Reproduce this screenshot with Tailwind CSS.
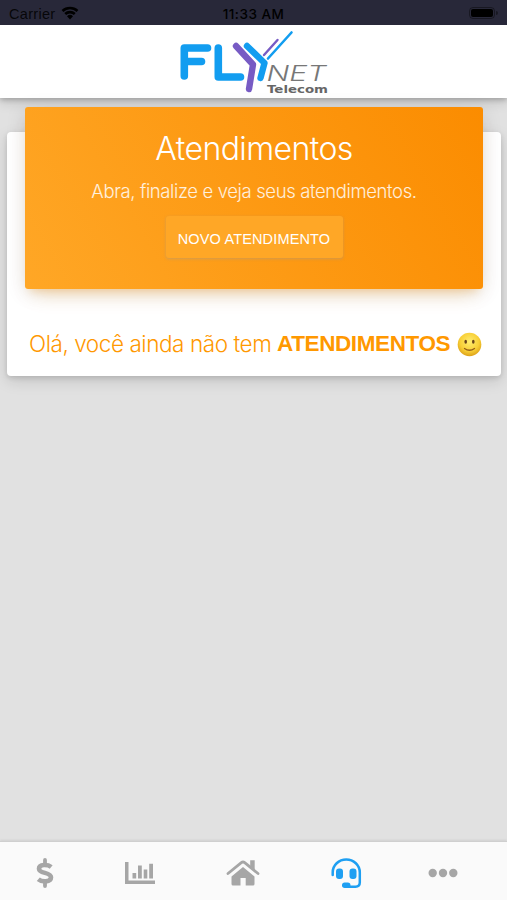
<!DOCTYPE html>
<html lang="pt-BR">

<head>
    <meta charset="UTF-8">
    <meta content="width=device-width, initial-scale=1.0" name="viewport">
    <title>Flynet Telecom - Atendimentos</title>
    <script src="https://cdn.jsdelivr.net/npm/@tailwindcss/browser@4"></script>
</head>

<body class="bg-[#e1e1e1] font-['Inter','Liberation_Sans',sans-serif] h-screen flex flex-col overflow-hidden">

<div class="relative z-20 shrink-0 h-[25px] bg-[#282839] px-[9px] grid grid-cols-3 items-center text-black text-sm leading-none">
    <div class="flex items-center gap-[6px] pt-[3px]">
        <span class="font-['Liberation_Sans',sans-serif] text-[14.500px] tracking-[0.3px] text-black/85">Carrier</span>
        <svg class="mb-[2px]" height="14" viewBox="0 0 18 14" width="18">
            <path d="M1.500 5A11 11 0 0 1 16.500 5M4.200 8A7 7 0 0 1 13.800 8" fill="none" stroke="currentColor" stroke-width="2.600"/>
            <path d="M9 13.500L6 10.300A4.300 4.300 0 0 1 12 10.300Z" fill="currentColor"/>
        </svg>
    </div>
    <span class="text-center pt-[4px] font-medium text-[13.500px] tracking-[0.5px]">11:33 AM</span>
    <div class="flex justify-end items-center gap-px pt-px pr-[-1px]">
        <div class="w-[26px] h-[12px] rounded-[4px] border border-black/40 p-px">
            <div class="h-full rounded-[2px] bg-black"></div>
        </div>
        <div class="w-[2px] h-[4px] rounded-r-full bg-black/40"></div>
    </div>
</div>

<header class="relative z-0 shrink-0 h-[73px] bg-white shadow-[0_2px_5px_rgba(0,0,0,0.2),0_4px_12px_rgba(0,0,0,0.14)] flex justify-center pt-[4px]">
    <svg aria-label="Flynet Telecom" height="66" role="img" viewBox="179 29 150 66" width="150">
        <g fill="none" stroke-linecap="round" stroke-linejoin="round">
            <path d="M184.300 76V48H207.500M184.500 61.500H201.500M218.300 48V77H240.500" stroke="#129df0" stroke-width="7.600"/>
            <path d="M236 46L253 64.500L249 89" stroke="#775bc4" stroke-width="6.400"/>
            <path d="M247 46L264.500 63L260.500 78" stroke="#129df0" stroke-width="6.400"/>
            <path d="M264 55L277.500 40" stroke="#775bc4" stroke-width="2.400"/>
            <path d="M268 58.500L291.500 32.500" stroke="#129df0" stroke-width="2.600"/>
        </g>
        <text class="font-['Inter',sans-serif] italic" fill="#777" font-size="21" font-weight="300" lengthAdjust="spacingAndGlyphs" textLength="60" x="266.500" y="81">NET</text>
        <text class="font-['DejaVu_Sans',sans-serif]" fill="#666" font-size="9.800" font-weight="700" lengthAdjust="spacingAndGlyphs" textLength="61" x="267" y="92.500">Telecom</text>
    </svg>
</header>

<main class="relative z-10 flex-1 pl-[7px] pr-[6px] pt-[34px]">
    <section class="h-[244px] bg-white rounded-[4px] px-[18px] shadow-[0_5px_15px_rgba(0,0,0,0.13),0_2px_5px_rgba(0,0,0,0.12)]">
        <div class="-translate-y-[25px] h-[182px] rounded-[3px] bg-linear-[60deg,#ffa726,#fb8c00] shadow-[0_12px_20px_-10px_rgba(255,152,0,0.28),0_4px_20px_rgba(0,0,0,0.12),0_7px_8px_-5px_rgba(255,152,0,0.2)] flex flex-col items-center text-white">
            <h1 class="mt-[22px] h-[40px] leading-[40px] text-[32px] font-light tracking-[-0.6px] whitespace-nowrap">Atendimentos</h1>
            <p class="mt-[10px] h-[24px] leading-[24px] text-[18.500px] font-light tracking-[-0.38px] text-white/85 whitespace-nowrap">Abra, finalize e veja seus atendimentos.</p>
            <button class="mt-[13px] w-[177px] h-[42px] pt-[5px] rounded-[3px] bg-[#ffa726] shadow-[0_1px_3px_rgba(153,153,153,0.45)] font-['Liberation_Sans',sans-serif] text-[14.500px] tracking-[0.15px] whitespace-nowrap">NOVO ATENDIMENTO</button>
        </div>
        <div class="mt-[15px] ml-[4px] flex items-center h-[30px] text-[22.500px] text-[#ff9800] whitespace-nowrap">
            <span class="w-[248px] font-light tracking-[-0.43px]">Olá, você ainda não tem</span>
            <strong class="w-[180px] font-['Liberation_Sans',sans-serif] font-bold tracking-[-0.4px]">ATENDIMENTOS</strong>
            <svg aria-label="🙂" height="25" role="img" viewBox="0 0 25 25" width="25">
                <defs>
                    <radialGradient cx="50%" cy="38%" id="face" r="62%">
                        <stop offset="0" stop-color="#ffed70"/>
                        <stop offset=".65" stop-color="#f8cf36"/>
                        <stop offset="1" stop-color="#dca018"/>
                    </radialGradient>
                </defs>
                <circle cx="12.500" cy="12.500" fill="url(#face)" r="11.800"/>
                <ellipse cx="8.700" cy="9.800" fill="#69431a" rx="1.300" ry="2"/>
                <ellipse cx="16.300" cy="9.800" fill="#69431a" rx="1.300" ry="2"/>
                <path d="M7.500 16.500Q12.500 20 17.500 16.500" fill="none" stroke="#966018" stroke-linecap="round" stroke-width="1.300"/>
            </svg>
        </div>
    </section>
</main>

<nav class="shrink-0 h-[59px] bg-[#fafafa] border-t border-[#cfcfcf] shadow-[0_-1px_2px_rgba(0,0,0,0.08)] px-[5px] pt-[4px] grid grid-cols-5 items-center justify-items-center text-[#a6a6a6]">
    <a aria-label="Financeiro" class="-translate-x-[10px]">
        <svg height="30" viewBox="0 0 18 30" width="18">
            <path d="M15.200 9C12 6.500 3 5.700 3 10.700C3 16 15 13.700 15 19.300C15 24.800 5.500 24 2.300 21.200" fill="none" stroke="currentColor" stroke-width="4.600"/>
            <path d="M9 2V7M9 23V28" stroke="currentColor" stroke-linecap="round" stroke-width="3.800"/>
        </svg>
    </a>
    <a aria-label="Consumo" class="-translate-x-[14px]">
        <svg fill="currentColor" height="22" viewBox="0 0 30 22" width="30">
            <path d="M0 0H3.500V18.500H30V22H0ZM7.500 11H11.200V16.500H7.500ZM13 3.500H16.800V16.500H13ZM18.700 7.500H22.300V16.500H18.700ZM24.200 1.800H28V16.500H24.200Z"/>
        </svg>
    </a>
    <a aria-label="Início" class="-translate-x-[10px]">
        <svg fill="currentColor" height="28" viewBox="0 0 34 28" width="34">
            <path d="M17 8L28.500 17.500V25Q28.500 26.500 27 26.500H19.700V19H14.500V26.500H7Q5.500 26.500 5.500 25V17.500Z"/>
            <path d="M2 14.500L15.300 3.600Q17 2.400 18.700 3.600L32 14.500" fill="none" stroke="currentColor" stroke-linecap="round" stroke-width="2.800"/>
            <path d="M24.200 1.200H28.700V12L24.200 8Z"/>
        </svg>
    </a>
    <a aria-label="Atendimentos" class="-translate-x-[6px] text-[#1e9ff2]">
        <svg fill="none" height="31" stroke="currentColor" viewBox="0 0 31 31" width="31">
            <path d="M1.700 17V14.500A13.500 13 0 0 1 28.800 14.500V24.500Q28.800 28.700 24.500 28.700H15.500" stroke-linecap="round" stroke-width="2.500"/>
            <rect fill="currentColor" height="10.500" rx="3" stroke="none" width="7" x="5" y="10.500"/>
            <rect fill="currentColor" height="10.500" rx="3" stroke="none" width="7" x="18.500" y="10.500"/>
            <rect fill="currentColor" height="5.500" rx="2.700" stroke="none" width="8.500" x="11" y="24.500"/>
        </svg>
    </a>
    <a aria-label="Mais" class="-translate-x-[9px]">
        <svg fill="currentColor" height="10" viewBox="0 0 30 10" width="30">
            <circle cx="4.700" cy="5" r="4.200"/>
            <circle cx="15" cy="5" r="4.200"/>
            <circle cx="25.300" cy="5" r="4.200"/>
        </svg>
    </a>
</nav>
</body>

</html>
